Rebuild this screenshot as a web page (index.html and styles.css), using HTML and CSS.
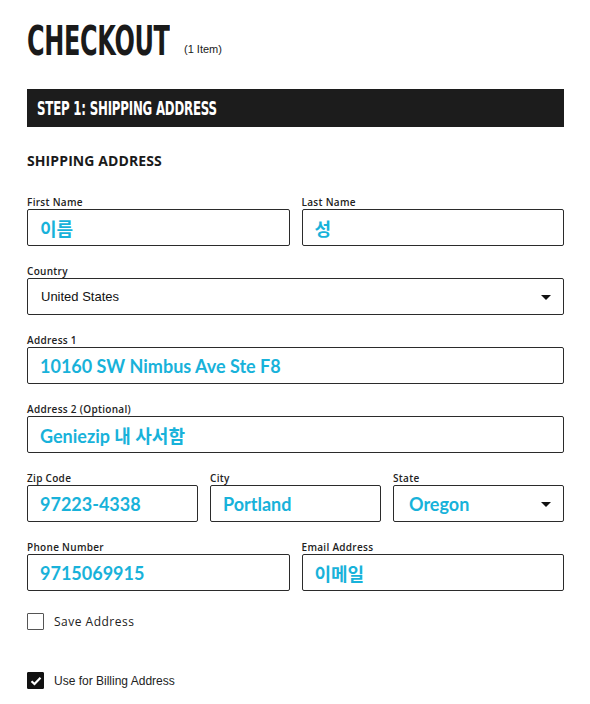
FILE: index.html
```html
<!DOCTYPE html>
<html lang="ko">
<head>
    <meta charset="UTF-8">
    <title>Checkout</title>
    <link rel="stylesheet" href="styles.css">
</head>
<body>
    <div class="checkout">
        <div class="page-title">
            <h1><span>CHECKOUT</span></h1>
            <small>(1 Item)</small>
        </div>

        <div class="step-bar"><span>STEP 1: SHIPPING ADDRESS</span></div>

        <h2 class="section-title">SHIPPING ADDRESS</h2>

        <div class="row two">
            <div class="field">
                <label>First Name</label>
                <div class="box">이름</div>
            </div>
            <div class="field">
                <label>Last Name</label>
                <div class="box">성</div>
            </div>
        </div>

        <div class="row">
            <div class="field">
                <label>Country</label>
                <div class="box select plain">United States<span class="caret"></span></div>
            </div>
        </div>

        <div class="row">
            <div class="field">
                <label>Address 1</label>
                <div class="box">10160 SW Nimbus Ave Ste F8</div>
            </div>
        </div>

        <div class="row">
            <div class="field">
                <label>Address 2 (Optional)</label>
                <div class="box">Geniezip 내 사서함</div>
            </div>
        </div>

        <div class="row three">
            <div class="field">
                <label>Zip Code</label>
                <div class="box">97223-4338</div>
            </div>
            <div class="field">
                <label>City</label>
                <div class="box">Portland</div>
            </div>
            <div class="field">
                <label>State</label>
                <div class="box select">Oregon<span class="caret"></span></div>
            </div>
        </div>

        <div class="row two">
            <div class="field">
                <label>Phone Number</label>
                <div class="box">9715069915</div>
            </div>
            <div class="field">
                <label>Email Address</label>
                <div class="box">이메일</div>
            </div>
        </div>

        <div class="check save">
            <span class="tick"></span>
            <span class="check-label">Save Address</span>
        </div>

        <div class="check billing">
            <span class="tick on">
                <svg width="12" height="10" viewBox="0 0 12 10"><path d="M1.5 5.2 L4.5 8 L10.5 1.8" fill="none" stroke="#fff" stroke-width="2.2"/></svg>
            </span>
            <span class="check-label">Use for Billing Address</span>
        </div>
    </div>
</body>
</html>
```

FILE: styles.css
```css
/* Página base */
body {
    margin: 0;
    background: #fff;
    font-family: "Open Sans", "Noto Sans CJK KR", sans-serif;
    color: #1a1a1a;
}

.checkout {
    width: 537px;
    padding: 20px 0 0 27px;
}

/* Título */
.page-title {
    display: flex;
    align-items: flex-end;
    height: 42px;
}

.page-title h1 {
    margin: 0;
    font-family: "DejaVu Sans", sans-serif;
    font-stretch: condensed;
    font-weight: bold;
    font-size: 41px;
    line-height: 42px;
    width: 146px;
    white-space: nowrap;
}

.page-title h1 span {
    display: inline-block;
    transform: scaleX(0.65);
    transform-origin: left center;
    letter-spacing: -0.5px;
}

.page-title small {
    font-family: "Liberation Sans", Arial, sans-serif;
    font-size: 11px;
    margin: 0 0 7px 11px;
}

/* Barra del paso */
.step-bar {
    margin-top: 27px;
    height: 38px;
    background: #1c1c1c;
    color: #fff;
    display: flex;
    align-items: center;
    padding-left: 10px;
    overflow: hidden;
}

.step-bar span {
    display: inline-block;
    font-family: "DejaVu Sans", sans-serif;
    font-stretch: condensed;
    font-weight: bold;
    font-size: 19px;
    white-space: nowrap;
    transform: scaleX(0.69);
    transform-origin: left center;
    letter-spacing: -0.3px;
    margin-top: -1px;
}

.section-title {
    margin: 25px 0 0;
    font-size: 14px;
    line-height: 18px;
    font-weight: bold;
    letter-spacing: 0.1px;
}

/* Filas de campos */
.row {
    display: flex;
    gap: 12px;
    margin-bottom: 19px;
}

.section-title + .row {
    margin-top: 26px;
}

.field {
    flex: 1;
    min-width: 0;
}

.field label {
    display: block;
    height: 13px;
    font-size: 10px;
    line-height: 12px;
    font-weight: 600;
    color: #222;
    letter-spacing: 0.3px;
}

.box {
    position: relative;
    box-sizing: border-box;
    height: 37px;
    border: 1px solid #2b2b2b;
    border-radius: 2px;
    padding: 0 12px;
    display: flex;
    align-items: center;
    font-family: Lato, "Noto Sans CJK KR", sans-serif;
    font-weight: bold;
    font-size: 18px;
    color: #18b2da;
    white-space: nowrap;
}

.box.select {
    padding-left: 15px;
}

.box.plain {
    font-family: "Liberation Sans", Arial, sans-serif;
    font-weight: normal;
    font-size: 13px;
    color: #111;
    padding-left: 13px;
}

.caret {
    position: absolute;
    right: 12px;
    top: 16px;
    border-left: 5px solid transparent;
    border-right: 5px solid transparent;
    border-top: 5px solid #111;
}

/* Casillas */
.check {
    display: flex;
    align-items: center;
}

.check.save {
    margin-top: 22px;
}

.check.billing {
    margin-top: 42px;
}

.tick {
    box-sizing: border-box;
    width: 17px;
    height: 17px;
    border: 1.5px solid #555;
    border-radius: 1px;
    display: flex;
    align-items: center;
    justify-content: center;
}

.tick.on {
    background: #111;
    border-color: #111;
}

.check-label {
    margin-left: 10px;
    font-size: 12px;
    color: #222;
}

.save .check-label {
    letter-spacing: 0.5px;
}

.billing .check-label {
    font-family: "Liberation Sans", Arial, sans-serif;
}
```
